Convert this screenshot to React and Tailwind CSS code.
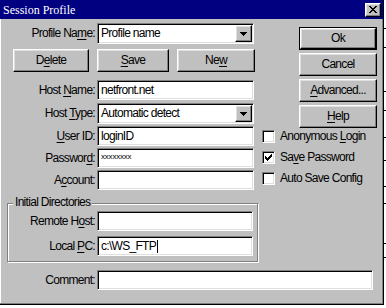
import React from 'react';

const FONT = "font-['Liberation_Sans',Arial,sans-serif] text-[12px] leading-[15px] tracking-[-0.7px] text-black";

const RAISED =
  'bg-[#c0c0c0] border border-t-white border-l-white border-b-black border-r-black shadow-[inset_-1px_-1px_0_#808080,inset_1px_1px_0_#dfdfdf]';
const SUNKEN =
  'bg-white border border-t-[#808080] border-l-[#808080] border-b-white border-r-white shadow-[inset_1px_1px_0_#000,inset_-1px_-1px_0_#dfdfdf]';

// underlined access key
function K({ children }) {
  return <span className="underline underline-offset-[2px] decoration-1">{children}</span>;
}

function Field({ w = 'w-[157px]', children }) {
  return (
    <div className={`${w} h-[20px] ${SUNKEN} flex items-center pl-[3px] whitespace-nowrap overflow-hidden`}>
      {children}
    </div>
  );
}

function Combo({ children }) {
  return (
    <div className={`w-[157px] h-[21px] ${SUNKEN} flex items-center pl-[3px] whitespace-nowrap`}>
      <span>{children}</span>
      <div className={`ml-auto mr-[1px] w-[17px] h-[17px] ${RAISED} flex items-center justify-center`}>
        <svg width="7" height="4" viewBox="0 0 7 4" shapeRendering="crispEdges">
          <path d="M0 0h7v1H0zM1 1h5v1H1zM2 2h3v1H2zM3 3h1v1H3z" fill="#000" />
        </svg>
      </div>
    </div>
  );
}

function Row({ label, labelW = 'w-[95px]', children, className = '' }) {
  return (
    <div className={`flex items-center ${className}`}>
      <span className={`${labelW} text-right whitespace-nowrap`}>{label}</span>
      <div className="ml-[2px]">{children}</div>
    </div>
  );
}

function Button({ className = '', children }) {
  return (
    <div className={`${className} h-[23px] ${RAISED} flex items-center justify-center whitespace-nowrap`}>
      {children}
    </div>
  );
}

function Check({ checked, children }) {
  return (
    <div className="flex items-center h-[13px]">
      <div className={`w-[13px] h-[13px] ${SUNKEN} flex items-center justify-center`}>
        {checked && (
          <svg width="7" height="7" viewBox="0 0 7 7" shapeRendering="crispEdges">
            <path d="M6 0h1v3H6zM5 1h1v3H5zM4 2h1v3H4zM3 3h1v3H3zM2 4h1v3H2zM1 3h1v3H1zM0 2h1v3H0z" fill="#000" />
          </svg>
        )}
      </div>
      <span className="ml-[5px] whitespace-nowrap">{children}</span>
    </div>
  );
}

export default function App() {
  const ticks = [28, 47, 91, 110, 137, 160, 186, 203, 243, 257];

  return (
    <div className={`w-[386px] h-[308px] bg-white flex items-start ${FONT}`}>
      <div className="w-[384px] h-[305px] bg-[#c0c0c0] border-r border-b border-black shadow-[inset_-1px_-1px_0_#808080,inset_1px_0_0_#fff] flex flex-col">
        {/* Title bar */}
        <div className="h-[19px] bg-[#000080] flex items-center pl-[3px]">
          <span className="font-['Liberation_Serif',serif] text-[12px] tracking-normal text-white leading-none">Session Profile</span>
          <div className={`ml-auto mr-[2px] w-[16px] h-[14px] ${RAISED} flex items-center justify-center`}>
            <svg width="8" height="7" viewBox="0 0 8 7" shapeRendering="crispEdges">
              <path d="M0 0h2v1H0zM6 0h2v1H6zM1 1h2v1H1zM5 1h2v1H5zM2 2h4v1H2zM3 3h2v1H3zM2 4h4v1H2zM1 5h2v1H1zM5 5h2v1H5zM0 6h2v1H0zM6 6h2v1H6z" fill="#000" />
            </svg>
          </div>
        </div>

        <div className="flex">
          {/* Left column */}
          <div className="w-[258px] flex flex-col">
            <Row className="mt-[4px]" label={<>Profile Na<K>m</K>e:</>}>
              <Combo>Profile name</Combo>
            </Row>

            <div className="mt-[5px] flex">
              <Button className="ml-[13px] w-[76px]">D<K>e</K>lete</Button>
              <Button className="ml-[8px] w-[72px]"><K>S</K>ave</Button>
              <Button className="ml-[8px] w-[78px]">Ne<K>w</K></Button>
            </div>

            <Row className="mt-[8px]" label={<>Host <K>N</K>ame:</>}>
              <Field>netfront.net</Field>
            </Row>
            <Row className="mt-[3px]" label={<>Host <K>T</K>ype:</>}>
              <Combo>Automatic detect</Combo>
            </Row>
            <Row className="mt-[2px]" label={<><K>U</K>ser ID:</>}>
              <Field>loginID</Field>
            </Row>
            <Row className="mt-[2px]" label={<>Passwor<K>d</K>:</>}>
              <Field>
                <span className="text-[8px] leading-none tracking-[-0.2px] -mt-[3px]">xxxxxxxx</span>
              </Field>
            </Row>
            <Row className="mt-[2px]" label={<>A<K>c</K>count:</>}>
              <Field />
            </Row>

            {/* Initial Directories group */}
            <div className="relative mt-[13px] ml-[7px] w-[251px] h-[59px] border border-[#808080] shadow-[inset_1px_1px_0_#fff,1px_1px_0_#fff] flex flex-col">
              <span className="absolute left-[5px] -top-[9px] px-[2px] bg-[#c0c0c0] whitespace-nowrap">Initial Directories</span>
              <Row className="mt-[7px]" labelW="w-[87px]" label={<>Remote H<K>o</K>st:</>}>
                <Field w="w-[156px]" />
              </Row>
              <Row className="mt-[5px]" labelW="w-[87px]" label={<>Local <K>P</K>C:</>}>
                <Field w="w-[156px]">
                  <span>c:\WS_FTP</span>
                  <span className="w-[1px] h-[13px] bg-black ml-[1px]" />
                </Field>
              </Row>
            </div>
          </div>

          {/* Right area */}
          <div className="flex flex-col">
            <div className="mt-[8px] ml-[41px] flex flex-col gap-[3px]">
              <div className="w-[78px] h-[23px] border border-black flex">
                <div className={`flex-1 ${RAISED} flex items-center justify-center`}>Ok</div>
              </div>
              <Button className="w-[78px]">Cancel</Button>
              <Button className="w-[78px]"><K>A</K>dvanced...</Button>
              <Button className="w-[78px]"><K>H</K>elp</Button>
            </div>
            <div className="mt-[2px] ml-[4px] flex flex-col gap-[8px]">
              <Check>Anonymous <K>L</K>ogin</Check>
              <Check checked>Sa<K>v</K>e Password</Check>
              <Check>Auto Save Config</Check>
            </div>
          </div>
        </div>

        <Row className="mt-[8px]" label="Comment:">
          <Field w="w-[276px]" />
        </Row>
      </div>

      {/* fragment of the window behind */}
      <div className="relative w-[2px] h-[305px]">
        {ticks.map((t) => (
          <div key={t} className="absolute left-0 w-[2px] h-[1px] bg-black" style={{ top: t }} />
        ))}
      </div>
    </div>
  );
}
